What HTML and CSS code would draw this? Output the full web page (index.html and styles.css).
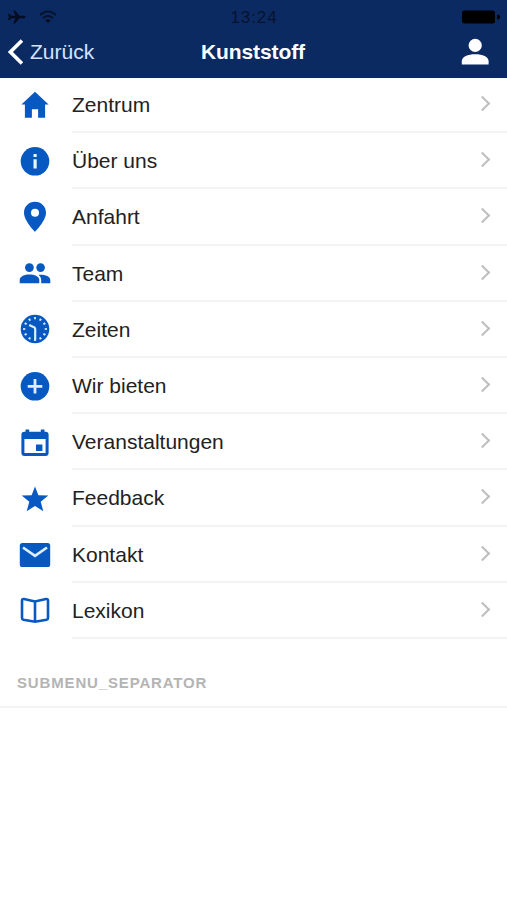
FILE: index.html
```
<!DOCTYPE html>
<html lang="de">
<head>
    <meta charset="UTF-8">
    <title>Kunststoff</title>
    <meta name="viewport" content="width=device-width, initial-scale=1.0">
    <link rel="stylesheet" href="styles.css">
</head>
<body>
    <header class="header">
        <div class="status-bar">
            <div class="signal">
                <svg width="19" height="16" viewBox="0 0 19 16"><path d="M18.5 8c0 .8-.8 1.2-1.7 1.2h-4.3L8 14.5H6.2l2.2-5.3H4.2L2.5 11H.8L1.9 8 .8 5h1.7l1.7 1.8h4.2L6.2 1.5H8l4.5 5.3h4.3c.9 0 1.7.4 1.7 1.2z"/></svg>
                <svg width="18" height="14" viewBox="0 0 18 14"><path class="wave" d="M1 5q8-7 16 0M4 8q5-4 10 0"/><path d="M6.3 10.2q2.7-2 5.4 0L9 13z"/></svg>
            </div>
            <span class="time">13:24</span>
            <svg class="battery" width="39" height="14" viewBox="0 0 39 14"><rect width="33" height="13" rx="2.5" y=".5"/><path d="M35 4.5q3 0 3 2.5t-3 2.5z"/></svg>
        </div>
        <nav class="nav-bar">
            <a class="back" href="#">
                <svg width="16" height="26" viewBox="0 0 16 26"><path d="M15 1.5L3.4 13 15 24.5"/></svg>
                <span>Zurück</span>
            </a>
            <h1>Kunststoff</h1>
            <a class="profile" href="#">
                <svg width="28" height="28" viewBox="0 0 28 28"><circle cx="14.2" cy="7.4" r="6.6"/><path d="M.8 26.5v-3.2c0-4.5 6-7 13.4-7s13.4 2.5 13.4 7v3.2z"/></svg>
            </a>
        </nav>
    </header>

    <ul class="menu">
        <li class="menu-item">
            <svg class="icon" viewBox="0 0 32 32"><path d="M16 2.8L29.6 15.4h-3.5v13.3h-7v-8.4h-6.2v8.4h-7V15.4H2.4z"/></svg>
            <a class="label" href="#">Zentrum</a>
        </li>
        <li class="menu-item">
            <svg class="icon" viewBox="0 0 32 32"><circle cx="16" cy="16.3" r="14.3"/><path class="light" d="M14.5 9h3.2v3h-3.2zM14.5 14.2h3.2v9.3h-3.2z"/></svg>
            <a class="label" href="#">Über uns</a>
        </li>
        <li class="menu-item">
            <svg class="icon" viewBox="0 0 32 32"><path fill-rule="evenodd" d="M16 .8C9.8.8 5 5.6 5 11.7 5 19.8 16 30.8 16 30.8s11-11 11-19.1C27 5.6 22.2.8 16 .8zm0 6.9a4 4 0 1 1 0 8 4 4 0 0 1 0-8z"/></svg>
            <a class="label" href="#">Anfahrt</a>
        </li>
        <li class="menu-item">
            <svg class="icon" viewBox="0 0 32 32"><circle cx="10.4" cy="10.6" r="4.4"/><circle cx="21.6" cy="10.6" r="4.3"/><path d="M.7 26.2v-3.1c0-3.7 5-5.5 9.8-5.5s9.8 1.8 9.8 5.5v3.1zM22.2 26.2v-3c0-2.2-1-4.1-2.7-5.3 5.4-.6 11.8 1.2 11.8 5.2v3.1z"/></svg>
            <a class="label" href="#">Team</a>
        </li>
        <li class="menu-item">
            <svg class="icon" viewBox="0 0 32 32">
                <circle cx="16" cy="16" r="14.3"/>
                <circle class="ticks" cx="16" cy="16" r="10.8" pathLength="120"/>
                <path class="hands" d="M10.2 12l5.4 2.6.6 1.4v10.8"/>
            </svg>
            <a class="label" href="#">Zeiten</a>
        </li>
        <li class="menu-item">
            <svg class="icon" viewBox="0 0 32 32"><circle cx="16" cy="16.3" r="14.3"/><path class="plus" d="M16 9v14.6M8.7 16.3h14.6"/></svg>
            <a class="label" href="#">Wir bieten</a>
        </li>
        <li class="menu-item">
            <svg class="icon" viewBox="0 0 32 32"><path fill-rule="evenodd" d="M6.5 3.5h3.7v2.2h11.6V3.5h3.7v2.2h1.1a3 3 0 0 1 3 3v18.2a3 3 0 0 1-3 3H5.4a3 3 0 0 1-3-3V8.7a3 3 0 0 1 3-3h1.1zM5.4 13.1v13.8h21.2V13.1zM17 18.5h6.4v6.4H17z"/></svg>
            <a class="label" href="#">Veranstaltungen</a>
        </li>
        <li class="menu-item">
            <svg class="icon" viewBox="0 0 32 32"><path d="M16 4.4l3.4 8.8 9.9.4-7.6 6.2 2.6 9.4-8.3-5.3-8.3 5.3 2.6-9.4-7.6-6.2 9.9-.4z"/></svg>
            <a class="label" href="#">Feedback</a>
        </li>
        <li class="menu-item">
            <svg class="icon" viewBox="0 0 32 32"><rect x=".8" y="5" width="30.4" height="24" rx="2.6"/><path class="flap" d="M4 9.5l12 8.3 12-8.3"/></svg>
            <a class="label" href="#">Kontakt</a>
        </li>
        <li class="menu-item">
            <svg class="icon" viewBox="0 0 32 32"><path class="book" d="M16 7.4L5 5.1Q3 4.7 3 6.7v17.2q0 1.4 1.5 1.8L16 27.8l11.5-2.1q1.5-.4 1.5-1.8V6.7q0-2-2-1.6zM16 7.4v20.4"/></svg>
            <a class="label" href="#">Lexikon</a>
        </li>
    </ul>

    <h2 class="separator">SUBMENU_SEPARATOR</h2>
</body>
</html>
```
FILE: styles.css
```
body {
    margin: 0;
    background-color: #fff;
    color: #222;
    font-family: 'Liberation Sans', Arial, sans-serif;
}

a {
    color: inherit;
    text-decoration: none;
}

svg {
    display: block;
    flex: none;
}

.header {
    height: 78px;
    background-color: #0b2a62;
    color: #fff;
}

.status-bar,
.nav-bar {
    display: grid;
    grid-template-columns: 1fr auto 1fr;
    align-items: center;
}

.status-bar {
    height: 34px;
    padding: 0 6px 0 7px;
    fill: #050d22;
    color: #07132e;
}

.signal {
    display: flex;
    align-items: center;
    gap: 13px;
}

.wave {
    fill: none;
    stroke: #07132e;
    stroke-width: 1.7;
}

.time {
    padding-top: 1px;
    font-size: 17px;
    letter-spacing: 0.9px;
}

.battery {
    justify-self: end;
    fill: #000;
}

.nav-bar {
    height: 36px;
    padding: 0 18px 0 17px;
}

.back {
    display: flex;
    align-items: center;
    gap: 7px;
    margin-left: -10px;
    color: #d5e2ff;
    font-size: 21px;
}

.back path {
    fill: none;
    stroke: #fff;
    stroke-width: 3.7;
}

h1 {
    margin: 0;
    font-size: 21px;
    letter-spacing: -0.1px;
}

.profile {
    justify-self: end;
    fill: #fff;
}

.menu {
    list-style: none;
    margin: -1px 0 0;
    padding: 0;
}

.menu-item {
    display: flex;
    align-items: center;
    height: 56.2px;
    padding-left: 19px;
}

.icon {
    width: 32px;
    height: 32px;
    margin: -1px 21px 0 0;
    fill: #0759c1;
}

.icon .light {
    fill: #e8f4ff;
}

.ticks,
.hands,
.plus,
.flap {
    fill: none;
    stroke: #dceeff;
}

.ticks {
    stroke-width: 2.2;
    stroke-dasharray: 3.6 6.4;
    stroke-dashoffset: 1.8;
}

.hands {
    stroke-width: 2.2;
}

.plus {
    stroke-width: 2.8;
}

.flap {
    stroke-width: 2.7;
}

.book {
    fill: none;
    stroke: #0759c1;
    stroke-width: 2.6;
}

.label {
    flex: 1;
    display: flex;
    align-items: center;
    justify-content: space-between;
    box-sizing: border-box;
    height: 100%;
    padding: 2px 19px 0 0;
    border-bottom: 2px solid #f3f3f3;
    font-size: 21px;
}

.label::after {
    content: '';
    width: 9px;
    height: 9px;
    margin-top: -3px;
    border: solid #bebebe;
    border-width: 2.5px 2.5px 0 0;
    transform: rotate(45deg);
}

.separator {
    margin: 0;
    padding: 35px 17px 15px;
    border-bottom: 2px solid #f3f3f3;
    color: #b4b4b4;
    font-size: 15px;
    line-height: 17px;
    letter-spacing: 0.85px;
}
```
